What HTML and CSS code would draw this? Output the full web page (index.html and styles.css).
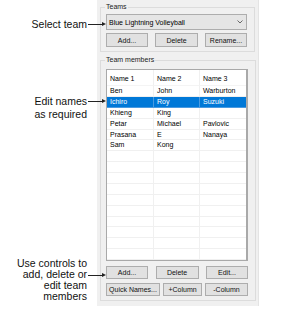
FILE: index.html
```html
<!DOCTYPE html>
<html lang="en">
<head>
  <meta charset="UTF-8" />
  <title>Team members</title>
  <link rel="stylesheet" href="styles.css">
</head>
<body>

<div class="figure">

  <!-- callouts -->
  <div class="notes">
    <div class="note note-team">
      <div class="pointer">Select team</div>
    </div>
    <div class="note note-names">
      <div class="pointer">Edit names</div>
      <div>as required</div>
    </div>
    <div class="note note-controls">
      <div>Use controls to</div>
      <div class="pointer">add, delete or</div>
      <div>edit team</div>
      <div>members</div>
    </div>
  </div>

  <!-- docker panel -->
  <div class="panel">
    <fieldset class="group group-teams">
      <legend>Teams</legend>
      <div class="combo">
        <span>Blue Lightning Volleyball</span>
        <svg width="6" height="4" viewBox="0 0 6 4"><path d="M0.5 0.5 L3 3 L5.5 0.5" fill="none" stroke="#5a5a5a" stroke-width="0.9"/></svg>
      </div>
      <div class="btn-row">
        <button class="btn">Add...</button>
        <button class="btn btn-mid">Delete</button>
        <button class="btn">Rename...</button>
      </div>
    </fieldset>

    <fieldset class="group group-members">
      <legend>Team members</legend>
      <div class="list">
        <div class="row head"><span>Name 1</span><span>Name 2</span><span>Name 3</span></div>
        <div class="row"><span>Ben</span><span>John</span><span>Warburton</span></div>
        <div class="row selected"><span>Ichiro</span><span>Roy</span><span>Suzuki</span></div>
        <div class="row"><span>Khieng</span><span>King</span><span></span></div>
        <div class="row"><span>Petar</span><span>Michael</span><span>Pavlovic</span></div>
        <div class="row"><span>Prasana</span><span>E</span><span>Nanaya</span></div>
        <div class="row"><span>Sam</span><span>Kong</span><span></span></div>
        <div class="row"><span></span><span></span><span></span></div>
        <div class="row"><span></span><span></span><span></span></div>
        <div class="row"><span></span><span></span><span></span></div>
        <div class="row"><span></span><span></span><span></span></div>
        <div class="row"><span></span><span></span><span></span></div>
        <div class="row"><span></span><span></span><span></span></div>
        <div class="row"><span></span><span></span><span></span></div>
        <div class="row"><span></span><span></span><span></span></div>
        <div class="row"><span></span><span></span><span></span></div>
        <div class="row"><span></span><span></span><span></span></div>
      </div>
      <div class="btn-row btn-row-list">
        <button class="btn">Add...</button>
        <button class="btn btn-mid">Delete</button>
        <button class="btn">Edit...</button>
      </div>
      <div class="btn-row btn-row-extra">
        <button class="btn btn-quick">Quick Names...</button>
        <button class="btn btn-plus">+Column</button>
        <button class="btn btn-minus">-Column</button>
      </div>
    </fieldset>
  </div>

</div>

</body>
</html>
```

FILE: styles.css
```css
* {
  margin: 0;
  padding: 0;
  box-sizing: border-box;
}

body {
  background: #fff;
  font-family: 'Liberation Sans', Arial, sans-serif;
  color: #000;
}

.figure {
  display: flex;
  align-items: flex-start;
}

/* callouts on the left */
.notes {
  width: 97px;
  padding: 18px 10px 0 0;
  font-size: 10.5px;
  text-align: right;
  color: #111;
}

.note-team {
  line-height: 12px;
}

.note-names {
  margin-top: 65px;
  line-height: 12.5px;
}

.note-controls {
  margin-top: 138px;
  line-height: 11px;
}

.pointer {
  position: relative;
}

.pointer::after {
  content: "";
  position: absolute;
  left: calc(100% + 1px);
  top: 50%;
  width: 15px;
  height: 1px;
  background: #222;
  z-index: 3;
}

.pointer::before {
  content: "";
  position: absolute;
  left: calc(100% + 15px);
  top: calc(50% - 2px);
  border-left: 4px solid #222;
  border-top: 2.5px solid transparent;
  border-bottom: 2.5px solid transparent;
  z-index: 3;
}

/* panel */
.panel {
  width: 162px;
  height: 306px;
  background: #f0f0f0;
  padding: 2px 3px 0 3px;
  font-size: 7px;
  border-right: 1px solid #e4e4e4;
}

.group {
  border: 1px solid #dcdcdc;
  padding: 2px 7px 4px 5px;
}

.group legend {
  line-height: 10px;
  padding: 0 1px;
  margin-left: -1px;
  color: #222;
}

.group-members {
  margin-top: 3px;
  padding-top: 4px;
}

.combo {
  height: 16px;
  display: flex;
  align-items: center;
  justify-content: space-between;
  padding: 0 3px 0 2px;
  background: #e5e5e5;
  border: 1px solid #adadad;
}

.btn-row {
  display: flex;
  justify-content: space-between;
  margin-top: 3px;
}

.btn {
  width: 42px;
  height: 14px;
  font-family: inherit;
  font-size: 7px;
  color: #111;
  background: #e1e1e1;
  border: 1px solid #adadad;
}

.btn-mid {
  width: 43px;
}

.btn-row-list {
  margin-top: 5px;
}

.btn-row-list .btn,
.btn-row-extra .btn {
  height: 13px;
}

.btn-row-extra {
  margin-top: 4px;
  gap: 3px;
}

.btn-quick {
  width: 54px;
}

.btn-plus {
  width: 39px;
}

.btn-minus {
  width: 43px;
}

/* list view */
.list {
  background: #fff;
  border: 1px solid #a9a9a9;
  border-right-width: 2px;
}

.row {
  display: grid;
  grid-template-columns: 47px 46px 46px;
  height: 10.875px;
  line-height: 10px;
}

.row span {
  padding-left: 3px;
  border-right: 1px solid #f0f0f0;
  border-bottom: 1px solid #f0f0f0;
  white-space: nowrap;
  overflow: hidden;
}

.row span:last-child {
  border-right: none;
}

.row.head {
  height: 16px;
  line-height: 17px;
}

.row.head span {
  border-bottom-color: #f4f4f4;
}

.row.selected {
  background: #0078d7;
  color: #fff;
}

.row.selected span {
  border-color: #4a9ae0;
}
```
